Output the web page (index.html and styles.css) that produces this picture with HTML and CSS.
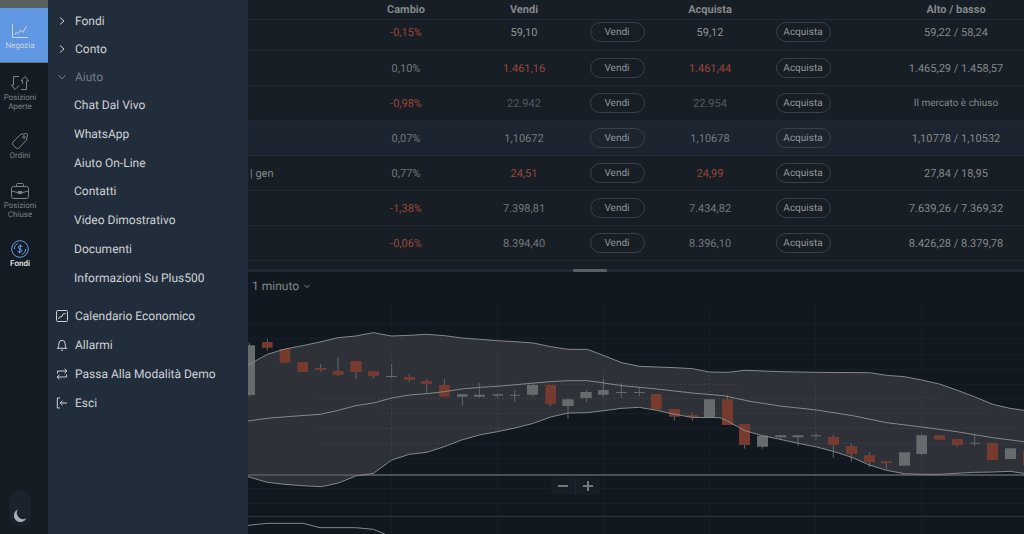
FILE: index.html
```html
<!DOCTYPE html>
<html lang="it">
<head>
<meta charset="utf-8">
<meta name="viewport" content="width=device-width, initial-scale=1">
<title>Negozia</title>
<link rel="stylesheet" href="styles.css">
</head>
<body class="app">
<nav class="rail" aria-label="Sezioni">
  <a class="rail-item rail-item-active" href="#">
    <svg class="rail-icon" viewBox="0 0 20 18"><path d="M2.500 2v13.500h15.500M5 12.500l1-2 2 1 3-3.500 2 2.500 3-5.500 1-1"/></svg>
    <span>Negozia</span>
  </a>
  <a class="rail-item" href="#">
    <svg class="rail-icon" viewBox="0 0 20 18"><path d="M9 2.500H3.500V11H1.500L5 15.500 9 11.500M11 15.500h5.500V7h2L15 2.500 11 6.500h1.500v3"/></svg>
    <span>Posizioni Aperte</span>
  </a>
  <a class="rail-item" href="#">
    <svg class="rail-icon" viewBox="0 0 20 18"><path d="M3 10l7.500-7.500 5.500-1q1.500 0 1.500 1.500l-1 5L9 16q-1.500 1-3 0l-3-3q-1-1.500 0-3z"/><circle cx="14" cy="5" r="1.200"/></svg>
    <span>Ordini</span>
  </a>
  <a class="rail-item" href="#">
    <svg class="rail-icon" viewBox="0 0 20 18"><rect x="1.500" y="4.500" width="17" height="12" rx="2"/><path d="M6.500 4.500v-2q0-1 1-1h5q1 0 1 1v2M1.500 9l6 1.500h5l6-1.500M8 9.500h4v2H8z"/></svg>
    <span>Posizioni Chiuse</span>
  </a>
  <a class="rail-item rail-item-funds" href="#">
    <svg class="rail-icon" viewBox="0 0 20 18"><circle cx="10" cy="9" r="8.300"/><path d="M4.500 9A5.500 5.500 0 0 1 8 3.500M15.500 9a5.500 5.500 0 0 1-3.500 5.500M12.300 7q-.5-1.200-2-1.200-2 0-2 1.500 0 1.200 1.700 1.600 1.800.4 1.800 1.700 0 1.500-2 1.500-1.700 0-2.200-1.300M10.600 4.500L9.400 13.500"/></svg>
    <span>Fondi</span>
  </a>
  <button class="theme-toggle" type="button" aria-label="Tema scuro">
    <svg class="moon" viewBox="0 0 14 14"><path d="M5 .5A6.500 6.500 0 1 0 13.300 9.300 6.200 6.200 0 0 1 5 .5z"/></svg>
  </button>
</nav>

<aside class="menu">
  <ul class="menu-list">
    <li><button class="menu-group" type="button"><svg class="chevron" viewBox="0 0 8 8"><path d="M2 .5L6 4 2 7.500"/></svg>Fondi</button></li>
    <li><button class="menu-group" type="button"><svg class="chevron" viewBox="0 0 8 8"><path d="M2 .5L6 4 2 7.500"/></svg>Conto</button></li>
    <li>
      <button class="menu-group menu-group-open" type="button" aria-expanded="true"><svg class="chevron" viewBox="0 0 8 8"><path d="M.5 2L4 6 7.500 2"/></svg>Aiuto</button>
      <ul class="menu-list menu-subs">
        <li><a class="menu-sub" href="#">Chat Dal Vivo</a></li>
        <li><a class="menu-sub" href="#">WhatsApp</a></li>
        <li><a class="menu-sub" href="#">Aiuto On-Line</a></li>
        <li><a class="menu-sub" href="#">Contatti</a></li>
        <li><a class="menu-sub" href="#">Video Dimostrativo</a></li>
        <li><a class="menu-sub" href="#">Documenti</a></li>
        <li><a class="menu-sub" href="#">Informazioni Su Plus500</a></li>
      </ul>
    </li>
  </ul>
  <ul class="menu-list menu-actions">
    <li><a class="menu-action" href="#"><svg class="menu-icon" viewBox="0 0 12 12"><rect x=".5" y=".5" width="11" height="11" rx="1"/><path d="M2.500 9l1-2 2.500-.5 1-2.500 2.500-.5"/></svg>Calendario Economico</a></li>
    <li><a class="menu-action" href="#"><svg class="menu-icon" viewBox="0 0 12 12"><path d="M.8 9.300h10.400M2 9.300q.8-1 .8-4.300a3.200 3.700 0 0 1 6.400 0q0 3.300.8 4.300M5 11q1 .8 2 0"/></svg>Allarmi</a></li>
    <li><a class="menu-action" href="#"><svg class="menu-icon" viewBox="0 0 12 12"><path d="M1.500 5.500V3h9M8.500.8L11 3 8.500 5.200M10.500 6.500V9h-9M3.500 6.800L1 9l2.500 2.200"/></svg>Passa Alla Modalità Demo</a></li>
    <li><a class="menu-action" href="#"><svg class="menu-icon" viewBox="0 0 12 12"><path d="M4 1H1.300v10H4M11 6H4.500M6.500 3.700L4.200 6l2.300 2.300"/></svg>Esci</a></li>
  </ul>
</aside>

<main class="main">
  <section class="quotes">
    <table class="quotes-table">
      <colgroup><col><col class="col-value"><col class="col-value"><col class="col-button"><col class="col-value"><col class="col-button"><col class="col-range"></colgroup>
      <thead>
        <tr><th></th><th>Cambio</th><th>Vendi</th><th></th><th>Acquista</th><th></th><th class="range">Alto / basso</th></tr>
      </thead>
      <tbody>
        <tr><td></td><td class="down">-0,15%</td><td class="bright">59,10</td><td><button class="trade" type="button">Vendi</button></td><td class="bright">59,12</td><td><button class="trade" type="button">Acquista</button></td><td class="range">59,22 / 58,24</td></tr>
        <tr><td></td><td>0,10%</td><td class="down">1.461,16</td><td><button class="trade" type="button">Vendi</button></td><td class="down">1.461,44</td><td><button class="trade" type="button">Acquista</button></td><td class="range">1.465,29 / 1.458,57</td></tr>
        <tr><td></td><td class="down">-0,98%</td><td class="closed">22.942</td><td><button class="trade" type="button">Vendi</button></td><td class="closed">22.954</td><td><button class="trade" type="button">Acquista</button></td><td class="range note">Il mercato è chiuso</td></tr>
        <tr class="selected"><td></td><td>0,07%</td><td>1,10672</td><td><button class="trade" type="button">Vendi</button></td><td>1,10678</td><td><button class="trade" type="button">Acquista</button></td><td class="range">1,10778 / 1,10532</td></tr>
        <tr><td class="name">| gen</td><td>0,77%</td><td class="down">24,51</td><td><button class="trade" type="button">Vendi</button></td><td class="down">24,99</td><td><button class="trade" type="button">Acquista</button></td><td class="range">27,84 / 18,95</td></tr>
        <tr><td></td><td class="down">-1,38%</td><td>7.398,81</td><td><button class="trade" type="button">Vendi</button></td><td>7.434,82</td><td><button class="trade" type="button">Acquista</button></td><td class="range">7.639,26 / 7.369,32</td></tr>
        <tr><td></td><td class="down">-0,06%</td><td>8.394,40</td><td><button class="trade" type="button">Vendi</button></td><td>8.396,10</td><td><button class="trade" type="button">Acquista</button></td><td class="range">8.426,28 / 8.379,78</td></tr>
      </tbody>
    </table>
  </section>
  <div class="splitter"><span class="splitter-grip"></span></div>
  <section class="chart">
    <div class="chart-toolbar">
      <select class="interval" aria-label="Intervallo"><option>1 minuto</option></select>
      <svg class="interval-chevron" viewBox="0 0 6 6"><path d="M.5 2L3 4.500 5.500 2"/></svg>
    </div>
    <div class="plot">
      <svg class="plot-svg" viewBox="24 0 2328 702" role="img" aria-label="Grafico a candele">
        <defs>
          <path id="area" d="M10 203L24 195 82 163 135 147 188 137 240 126 295 113 347 108 400 98 455 108 508 106 560 103 613 107 665 114 718 118 772 122 825 125 880 129 932 140 985 148 1042 148 1092 167 1145 188 1198 199 1250 201 1305 203 1357 206 1408 216 1465 217 1515 211 1620 215 1730 217 1888 218 1940 226 1993 230 2045 240 2098 252 2150 270 2203 290 2258 313 2310 325 2352 331 2370 335V522L2352 520 2310 514 2258 516 2203 517 2150 520 2098 523 2045 523 1993 521 1940 511 1888 495 1838 473 1783 455 1730 441 1675 430 1620 418 1567 407 1515 392 1462 363 1440 353 1357 352 1305 343 1250 331 1198 322 1145 325 1092 332 1042 338 985 339 932 351 880 370 825 384 772 395 718 405 665 420 613 440 560 457 508 463 455 480 400 520 347 528 295 549 245 560 188 557 135 553 82 547 24 530 10 526z"/>
          <clipPath id="inside"><use href="#area"/></clipPath>
        </defs>
        <path class="grid" d="M24 70H2352M24 115H2352M24 163H2352M24 208H2352M24 253H2352M24 295H2352M24 340H2352M24 385H2352M24 430H2352M24 475H2352M24 565H2352M24 610H2352M455 20V702M772 20V702M1090 20V702M1408 20V702M1727 20V702M2045 20V702"/>
        <use class="band" href="#area"/>
        <path class="grid-dots" clip-path="url(#inside)" d="M235 295H2100M430 340H2250M235 385H2330M245 430H2352M660 253H1500M455 145V460M772 160V390M1090 205V340M1408 225V350M1727 250V440M2045 265V515"/>
        <path class="axis" d="M24 525H2352"/>
        <path class="divider" d="M24 649H2352"/>
        <path class="wick" d="M28 128V290M82 117V152M242 193V215M294 171V228M348 183V237M400 214V235M455 193V233M508 222V246M560 237V280M613 237V290M667 283V318M718 249V293M772 282V293M824 271V306M878 249V290M931 255V318M984 294V356M1039 270V306M1090 237V290M1144 250V293M1198 260V289M1303 327V362M1357 338V362M1462 284V375M1514 372V446M1567 407V446M1621 406V418M1674 406V438M1728 400V418M1780 405V473M1834 430V485M1888 457V502M1939 484V508M2045 401V466M2152 417V440M2204 404V438"/>
        <path class="candle-up" d="M24 136h21v149H24zM438 228h32v3h-32zM651 283h32v7h-32zM702 284h33v6h-33zM758 283h31v4h-31zM810 284h30v3h-30zM861 255h33v29h-33zM967 298h34v20h-34zM1021 276h34v18h-34zM1074 270h32v14h-32zM1128 276h32v3h-32zM1182 276h32v3h-32zM1392 298h33v53h-33zM1551 407h33v33h-33zM1606 406h33v6h-33zM1657 406h33v6h-33zM1713 406h30v3h-30zM1977 457h33v40h-33zM2029 406h32v56h-32zM2190 428h30v3h-30zM2295 445h33v32h-33z"/>
        <path class="candle-down" d="M66 126h32v17H66zM119 147h32v41h-32zM172 186h32v30h-32zM225 204h34v6h-34zM278 213h33v11h-33zM331 183h34v33h-34zM384 214h33v14h-33zM492 231h33v9h-33zM543 243h33v9h-33zM597 255h32v35h-32zM916 255h32v56h-32zM1233 282h32v47h-32zM1287 327h33v23h-33zM1342 345h31v7h-31zM1446 298h33v77h-33zM1497 372h33v63h-33zM1764 411h33v24h-33zM1818 438h33v24h-33zM1872 466h33v20h-33zM1923 484h33v6h-33zM2082 406h33v13h-33zM2136 417h33v18h-33zM2241 429h33v51h-33zM2349 452h3v43h-3z"/>
        <use class="line" href="#area"/>
        <path class="line" d="M24 363L82 355 155 349 240 343 295 331 347 317 400 309 455 294 508 285 560 281 613 275 665 267 720 262 772 259 850 252 932 245 985 242 1042 242 1092 249 1145 257 1198 262 1250 267 1357 279 1450 287 1530 304 1620 318 1730 330 1838 347 1940 368 2045 381 2150 395 2258 413 2352 425M24 676L82 670H190L240 683H347L400 688 435 702"/>
      </svg>
      <div class="zoom-controls">
        <button class="zoom-button" type="button" aria-label="Riduci"><svg viewBox="0 0 12 12"><path d="M1 6h10"/></svg></button>
        <button class="zoom-button" type="button" aria-label="Ingrandisci"><svg viewBox="0 0 12 12"><path d="M1 6h10M6 1v10"/></svg></button>
      </div>
    </div>
  </section>
</main>
</body>
</html>
```
FILE: styles.css
```css
* { box-sizing: border-box; }

.app {
  display: flex;
  min-height: 100vh;
  margin: 0;
  overflow: hidden;
  background: #12181f;
  color: #84888b;
  font-family: Roboto, "Liberation Sans", sans-serif;
  font-size: 11px;
  text-rendering: geometricPrecision;
}

button, select {
  margin: 0;
  padding: 0;
  border: 0;
  background: none;
  color: inherit;
  font: inherit;
  text-rendering: inherit;
}

a { color: inherit; text-decoration: none; }

svg {
  display: block;
  fill: none;
  stroke: currentColor;
}

/* Left icon rail */
.rail {
  display: flex;
  flex: none;
  flex-direction: column;
  width: 48px;
  height: 100vh;
  border-top: 8px solid #5b615f;
  background: #141b22;
  color: #7d8286;
  font-size: 8px;
  line-height: 9px;
}

.rail-item {
  display: flex;
  flex-direction: column;
  align-items: center;
  justify-content: center;
  height: 54px;
  padding-right: 8px;
  text-align: center;
}

.rail-item-active {
  height: 55px;
  margin-bottom: 2px;
  padding-top: 2px;
  border-bottom: 1px solid #6b7070;
  background: #5f97e3;
  color: #ced4dc;
}

.rail-item-funds { color: #6a9de8; }
.rail-item-funds span { color: #e6e8ea; font-weight: 500; }

.rail-icon { width: 20px; height: 18px; margin-bottom: 1px; flex: none; }

.theme-toggle {
  width: 22px;
  height: 36px;
  margin: auto 0 8px 9px;
  padding: 16px 4px 0;
  border-radius: 11px;
  background: #1b222d;
}

.moon { width: 14px; height: 14px; fill: #a9acb2; stroke: none; }

/* Drop-down menu panel */
.menu {
  flex: none;
  width: 200px;
  padding-top: 7px;
  background: #222d3c;
  color: #ced1d4;
  font-size: 12px;
}

.menu-list { margin: 0; padding: 0; list-style: none; }

.menu-subs, .menu-actions {
  display: grid;
  grid-auto-rows: 1fr;
  align-items: center;
}

.menu-subs { height: 201px; }
.menu-actions { height: 115px; margin-top: 10px; }

.menu-group {
  display: flex;
  align-items: center;
  width: 100%;
  height: 28px;
  padding-left: 10px;
  gap: 9px;
}

.menu-group-open { color: #747b82; }
.chevron { width: 8px; height: 8px; }

.menu-sub, .menu-action {
  display: flex;
  align-items: center;
  padding-left: 26px;
}

.menu-action { padding-left: 8px; gap: 7px; }
.menu-icon { width: 12px; height: 12px; }

/* Quotes table */
.main { flex: 1; min-width: 0; }

.quotes { padding-bottom: 8px; background: #181e26; }

.quotes-table {
  width: 100%;
  border-collapse: separate;
  border-spacing: 0;
  table-layout: fixed;
  text-align: center;
}

.col-value { width: 118px; }
.col-button { width: 68px; }
.col-range { width: 187px; }

.quotes-table th {
  height: 20px;
  padding: 0;
  border-bottom: 1px solid #212936;
  font-weight: 700;
}

.quotes-table td {
  height: 35px;
  padding: 0;
  border-bottom: 1px solid #1f2631;
  color: #74797d;
}

.quotes-table tbody tr:first-child td { height: 31px; padding-bottom: 6px; }
.quotes-table .range { padding-left: 51px; color: #84888b; }
.quotes-table .name { padding-left: 2px; color: #84888b; text-align: left; }
.quotes-table .down { color: #9a4636; }
.quotes-table .bright { color: #909497; }
.quotes-table .closed { color: #555a60; }
.quotes-table .note { font-size: 10px; }
.quotes-table .selected td { background: #1c2430; border-color: #222d39; }

.trade {
  display: inline-block;
  width: 55px;
  height: 20px;
  border: 1px solid #3a4047;
  border-radius: 10px;
  color: #94979a;
  font-size: 10px;
  vertical-align: middle;
}

.splitter {
  display: flex;
  justify-content: center;
  height: 3px;
  padding-right: 92px;
  background: #202735;
}

.splitter-grip { width: 34px; border-radius: 2px; background: #5a6062; }

/* Chart */
.chart-toolbar {
  display: flex;
  align-items: center;
  height: 28px;
  padding-left: 4px;
  gap: 4px;
}

.interval { appearance: none; font-size: 12px; }
.interval-chevron { width: 6px; height: 6px; }

.plot { position: relative; }
.plot-svg { width: 100%; height: auto; }
.plot-svg path, .plot-svg use { stroke-width: 3; }

.plot-svg .grid { stroke: #1a2028; }
.plot-svg .band { fill: #2e3238; stroke: none; }
.plot-svg .grid-dots { stroke: #4a4f54; stroke-dasharray: 3 9; }
.plot-svg .axis { stroke: #4d5155; stroke-width: 6; }
.plot-svg .divider { stroke: #343840; }
.plot-svg .wick { stroke: #626769; }
.plot-svg .candle-up { fill: #666b6d; stroke: none; }
.plot-svg .candle-down { fill: #773a2e; stroke: none; }
.plot-svg .line { stroke: #85898b; }

.zoom-controls {
  position: absolute;
  top: 177px;
  left: 39%;
  display: flex;
  width: 49px;
  height: 18px;
  border-radius: 3px;
  background: #171d25;
}

.zoom-button { flex: 1; padding: 3px 6px; }
.zoom-button + .zoom-button { border-left: 1px solid #1d2530; }
.zoom-button svg { width: 12px; height: 12px; stroke: #737879; stroke-width: 2; }
```
